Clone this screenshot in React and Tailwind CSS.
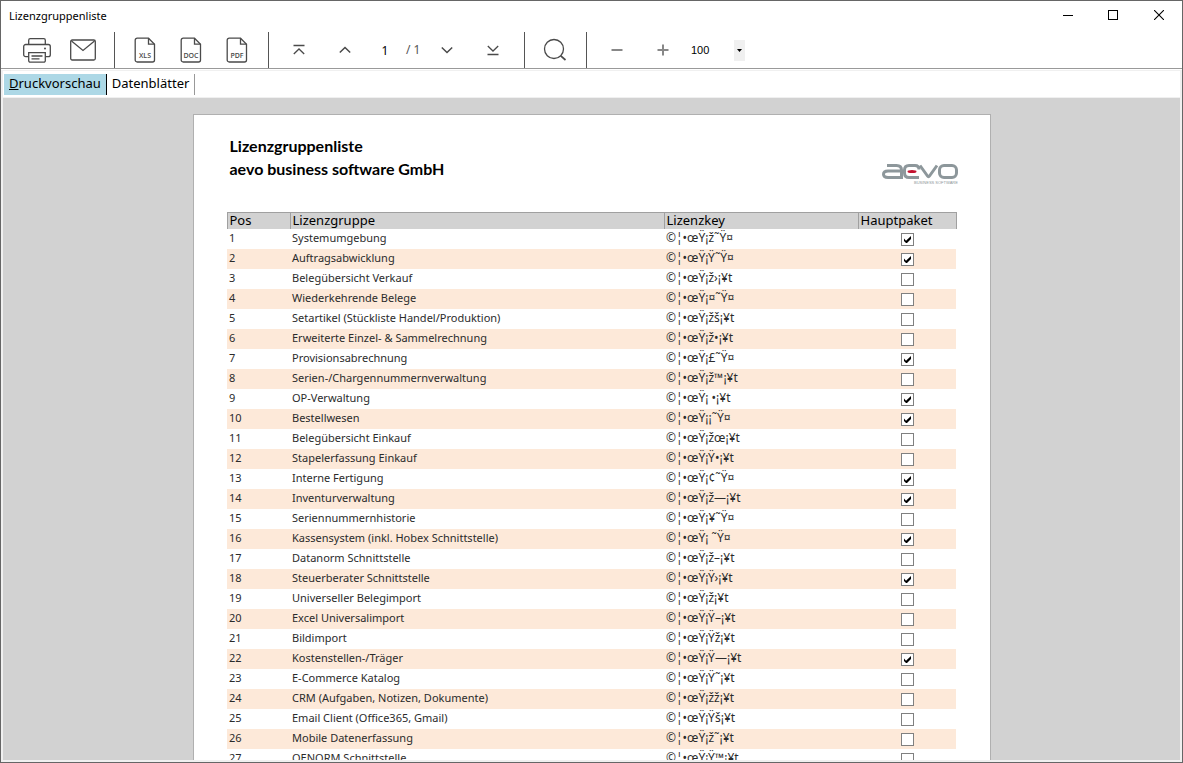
import React, { useState } from 'react';

const licenses = [
  { name: 'Systemumgebung', key: '©¦•œŸ¡ž˜Ÿ¤', main: true },
  { name: 'Auftragsabwicklung', key: '©¦•œŸ¡Ÿ˜Ÿ¤', main: true },
  { name: 'Belegübersicht Verkauf', key: '©¦•œŸ¡ž›¡¥t', main: false },
  { name: 'Wiederkehrende Belege', key: '©¦•œŸ¡¤˜Ÿ¤', main: false },
  { name: 'Setartikel (Stückliste Handel/Produktion)', key: '©¦•œŸ¡žš¡¥t', main: false },
  { name: 'Erweiterte Einzel- & Sammelrechnung', key: '©¦•œŸ¡ž•¡¥t', main: false },
  { name: 'Provisionsabrechnung', key: '©¦•œŸ¡£˜Ÿ¤', main: true },
  { name: 'Serien-/Chargennummernverwaltung', key: '©¦•œŸ¡ž™¡¥t', main: false },
  { name: 'OP-Verwaltung', key: '©¦•œŸ¡ •¡¥t', main: true },
  { name: 'Bestellwesen', key: '©¦•œŸ¡¡˜Ÿ¤', main: true },
  { name: 'Belegübersicht Einkauf', key: '©¦•œŸ¡žœ¡¥t', main: false },
  { name: 'Stapelerfassung Einkauf', key: '©¦•œŸ¡Ÿ•¡¥t', main: false },
  { name: 'Interne Fertigung', key: '©¦•œŸ¡¢˜Ÿ¤', main: true },
  { name: 'Inventurverwaltung', key: '©¦•œŸ¡ž—¡¥t', main: true },
  { name: 'Seriennummernhistorie', key: '©¦•œŸ¡¥˜Ÿ¤', main: false },
  { name: 'Kassensystem (inkl. Hobex Schnittstelle)', key: '©¦•œŸ¡ ˜Ÿ¤', main: true },
  { name: 'Datanorm Schnittstelle', key: '©¦•œŸ¡ž–¡¥t', main: false },
  { name: 'Steuerberater Schnittstelle', key: '©¦•œŸ¡Ÿ›¡¥t', main: true },
  { name: 'Universeller Belegimport', key: '©¦•œŸ¡ž¡¥t', main: false },
  { name: 'Excel Universalimport', key: '©¦•œŸ¡Ÿ–¡¥t', main: false },
  { name: 'Bildimport', key: '©¦•œŸ¡Ÿž¡¥t', main: false },
  { name: 'Kostenstellen-/Träger', key: '©¦•œŸ¡Ÿ—¡¥t', main: true },
  { name: 'E-Commerce Katalog', key: '©¦•œŸ¡Ÿ˜¡¥t', main: false },
  { name: 'CRM (Aufgaben, Notizen, Dokumente)', key: '©¦•œŸ¡žž¡¥t', main: false },
  { name: 'Email Client (Office365, Gmail)', key: '©¦•œŸ¡Ÿš¡¥t', main: false },
  { name: 'Mobile Datenerfassung', key: '©¦•œŸ¡ž˜¡¥t', main: false },
  { name: 'OENORM Schnittstelle', key: '©¦•œŸ¡Ÿ™¡¥t', main: false }
];

const ToolButton = ({ label, onClick, children }) => (
  <button
    type="button"
    aria-label={label}
    onClick={onClick}
    className="flex h-9 w-[46px] items-center justify-center text-[#4a4a4a] hover:bg-gray-100"
  >
    {children}
  </button>
);

const Separator = () => <div className="mr-[7px] ml-2 h-9 w-px bg-[#555]" />;

const FileIcon = ({ type }) => (
  <svg width="22" height="26" viewBox="0 0 22 26" fill="none" stroke="currentColor" strokeWidth="1.3">
    <path d="M3.2 1.2h11.3l6 6V23a2 2 0 0 1-2 2H3.2a2 2 0 0 1-2-2V3.2a2 2 0 0 1 2-2z" />
    <path d="M14.5 1.2v6h6" />
    <text
      x="11"
      y="20.5"
      textAnchor="middle"
      fill="currentColor"
      stroke="none"
      className="font-['Open_Sans'] text-[7px] font-semibold"
    >
      {type}
    </text>
  </svg>
);

const PrintIcon = () => (
  <svg width="28" height="25" viewBox="0 0 28 25" fill="none" stroke="currentColor" strokeWidth="1.3">
    <path d="M5.7 6.5V2.2a1.5 1.5 0 0 1 1.5-1.5h13.6a1.5 1.5 0 0 1 1.5 1.5v4.3" />
    <path d="M5.7 18.7H2.7a2 2 0 0 1-2-2V8.5a2 2 0 0 1 2-2h22.6a2 2 0 0 1 2 2v8.2a2 2 0 0 1-2 2h-3" />
    <path d="M5.7 14.7h16.6v8a1.5 1.5 0 0 1-1.5 1.5H7.2a1.5 1.5 0 0 1-1.5-1.5z" />
    <path d="M8.5 18h11M8.5 20.8h8" />
    <circle cx="22" cy="10.5" r="1" fill="currentColor" stroke="none" />
  </svg>
);

const MailIcon = () => (
  <svg width="26" height="22" viewBox="0 0 26 22" fill="none" stroke="currentColor" strokeWidth="1.3">
    <rect x="0.7" y="1" width="24.6" height="20" rx="1.5" />
    <path d="M1.5 2L13 11.5 24.5 2" />
  </svg>
);

const Logo = () => (
  <svg width="76" height="24" viewBox="0 0 76 24" fill="none" stroke="#8d979b" strokeWidth="3" aria-label="aevo">
    <path d="M5 2.5h9.500q5 0 5 4.500v7.500H6q-4.500 0-4.500-3.200t4.500-3.200h13" />
    <path d="M37 14.500H27q-4.500 0-4.500-4.500V7q0-4.500 4.500-4.500h6q4 0 4 4" />
    <path d="M38 2.500l7.500 10.500q1 1.500 2 0L55 2.500" />
    <rect x="57.500" y="2.500" width="17" height="12" rx="4.500" />
    <ellipse cx="30" cy="8.500" rx="4.500" ry="1.500" fill="#c4122f" stroke="none" />
    <text
      x="32"
      y="21"
      fill="#8d979b"
      stroke="none"
      className="font-['Liberation_Sans'] text-[4px]"
    >
      BUSINESS SOFTWARE
    </text>
  </svg>
);

const Checkbox = ({ label, defaultChecked }) => (
  <span className="relative block size-[13px]">
    <input
      type="checkbox"
      aria-label={label}
      defaultChecked={defaultChecked}
      className="peer block size-[13px] appearance-none border border-[#808080] bg-white"
    />
    <svg
      viewBox="0 0 13 13"
      className="pointer-events-none absolute inset-0 hidden size-[13px] peer-checked:block"
    >
      <path d="M3 5.500l2 2.200L10 3v3L6 10H5L3 8z" fill="#000" />
    </svg>
  </span>
);

const App = () => {
  const [page, setPage] = useState('1');
  const [zoom, setZoom] = useState('100');
  const [tab, setTab] = useState('preview');

  return (
    <div className="flex h-screen flex-col overflow-hidden border border-[#666] bg-white font-['Noto_Sans',sans-serif] text-black">
      <header className="flex h-[31px] shrink-0 items-start justify-between pl-2">
        <h1 className="pt-[7px] text-[11px] leading-4">Lizenzgruppenliste</h1>
        <div className="flex">
          <button type="button" aria-label="Minimieren" className="flex h-7 w-[45px] items-center justify-center">
            <svg width="10" height="10" viewBox="0 0 10 10" stroke="#000">
              <path d="M0 5.5h10" />
            </svg>
          </button>
          <button type="button" aria-label="Maximieren" className="flex h-7 w-[46px] items-center justify-center">
            <svg width="10" height="10" viewBox="0 0 10 10" fill="none" stroke="#000">
              <rect x="0.5" y="0.5" width="9" height="9" />
            </svg>
          </button>
          <button type="button" aria-label="Schließen" className="flex h-7 w-[46px] items-center justify-center">
            <svg width="10" height="10" viewBox="0 0 10 10" stroke="#000" strokeWidth="1.1">
              <path d="M0 0l10 10M10 0L0 10" />
            </svg>
          </button>
        </div>
      </header>

      <div className="flex h-[37px] shrink-0 items-end border-b border-[#999] pl-[13px]">
        <ToolButton label="Drucken"><PrintIcon /></ToolButton>
        <ToolButton label="E-Mail"><MailIcon /></ToolButton>
        <Separator />
        <ToolButton label="Export XLS"><FileIcon type="XLS" /></ToolButton>
        <ToolButton label="Export DOC"><FileIcon type="DOC" /></ToolButton>
        <ToolButton label="Export PDF"><FileIcon type="PDF" /></ToolButton>
        <Separator />
        <ToolButton label="Erste Seite">
          <svg width="12" height="12" viewBox="0 0 12 12" fill="none" stroke="currentColor" strokeWidth="1.3">
            <path d="M0.5 1.5h11M0.8 10L6 5l5.2 5" />
          </svg>
        </ToolButton>
        <ToolButton label="Vorherige Seite">
          <svg width="12" height="12" viewBox="0 0 12 12" fill="none" stroke="currentColor" strokeWidth="1.5">
            <path d="M0.8 8.5L6 3.5l5.2 5" />
          </svg>
        </ToolButton>
        <input
          type="text"
          aria-label="Seite"
          value={page}
          onChange={(e) => setPage(e.target.value)}
          className="h-9 w-[34px] text-center text-[12px]"
        />
        <span className="w-[22px] pl-1 text-[12px] leading-9 text-[#555]">/ 1</span>
        <ToolButton label="Nächste Seite">
          <svg width="12" height="12" viewBox="0 0 12 12" fill="none" stroke="currentColor" strokeWidth="1.5">
            <path d="M0.8 3.5L6 8.5l5.2-5" />
          </svg>
        </ToolButton>
        <ToolButton label="Letzte Seite">
          <svg width="12" height="12" viewBox="0 0 12 12" fill="none" stroke="currentColor" strokeWidth="1.3">
            <path d="M0.5 10.5h11M0.8 2L6 7l5.2-5" />
          </svg>
        </ToolButton>
        <Separator />
        <ToolButton label="Suchen">
          <svg width="24" height="24" viewBox="0 0 24 24" fill="none" stroke="currentColor" strokeWidth="1.3">
            <circle cx="11" cy="11" r="9.5" />
            <path d="M17.8 17.8l4.7 4.2" strokeWidth="1.7" />
          </svg>
        </ToolButton>
        <Separator />
        <ToolButton label="Verkleinern">
          <svg width="12" height="12" viewBox="0 0 12 12" stroke="#888" strokeWidth="2">
            <path d="M0.5 6h11" />
          </svg>
        </ToolButton>
        <ToolButton label="Vergrößern">
          <svg width="12" height="12" viewBox="0 0 12 12" stroke="#888" strokeWidth="2">
            <path d="M0.5 6h11M6 0.5v11" />
          </svg>
        </ToolButton>
        <div className="relative h-9">
          <select
            aria-label="Zoom"
            value={zoom}
            onChange={(e) => setZoom(e.target.value)}
            className="h-9 w-[59px] appearance-none pl-[5px] font-['Liberation_Sans',sans-serif] text-[11px]"
          >
            <option>50</option>
            <option>100</option>
            <option>200</option>
          </select>
          <span className="pointer-events-none absolute top-2 right-0 flex h-[21px] w-[11px] items-center justify-center bg-[#f0f0f0]">
            <svg width="5" height="3" viewBox="0 0 5 3">
              <path d="M0 0h5L2.5 3z" />
            </svg>
          </span>
        </div>
      </div>

      <main className="mt-px flex min-h-0 flex-1 flex-col border-2 border-t border-[#f0f0f0]">
        <div role="tablist" className="flex h-[27px] shrink-0 items-center border-b border-[#f0f0f0] pl-px text-[13px] leading-[18px]">
          <button
            type="button"
            role="tab"
            aria-selected={tab === 'preview'}
            onClick={() => setTab('preview')}
            className="h-[21px] border-r border-black bg-[#add8e6] px-[5px] pb-[3px]"
          >
            <span className="underline">D</span>ruckvorschau
          </button>
          <button
            type="button"
            role="tab"
            aria-selected={tab === 'sheets'}
            onClick={() => setTab('sheets')}
            className="h-[21px] border-r border-[#999] px-[5px] pb-[3px]"
          >
            Datenblätter
          </button>
        </div>

        <div className="min-h-0 flex-1 overflow-hidden bg-[#d2d2d2] pt-4">
          <article className="mx-auto w-full max-w-[798px] border border-[#b0b0b0] bg-white px-[33px] pb-10">
            <div className="flex h-[97px] items-start justify-between pl-[3px]">
              <h2 className="pt-[19px] font-['Lato',sans-serif] text-[16px] leading-[23px] font-bold">
                Lizenzgruppenliste
                <br />
                aevo business software GmbH
              </h2>
              <div className="-mr-px pt-12">
                <Logo />
              </div>
            </div>
            <table className="w-full table-fixed border-collapse text-left text-[11px] leading-[17px] text-[#2b2b2b]">
              <colgroup>
                <col className="w-[63px]" />
                <col />
                <col className="w-[194px]" />
                <col className="w-[98px]" />
              </colgroup>
              <thead>
                <tr className="h-4 bg-[#d2d2d2] align-top text-[13px] leading-[14px] text-black">
                  {['Pos', 'Lizenzgruppe', 'Lizenzkey', 'Hauptpaket'].map((title) => (
                    <th key={title} className="border-x border-t border-[#a0a0a0] p-0 pb-0.5 pl-0.5 font-normal">
                      {title}
                    </th>
                  ))}
                </tr>
              </thead>
              <tbody>
                {licenses.map((item, i) => (
                  <tr key={item.name} className="h-5 align-top even:bg-[#fde9d9]">
                    <td className="p-0 pl-0.5">{i + 1}</td>
                    <td className="p-0 pl-0.5">{item.name}</td>
                    <td className="p-0 pl-0.5 text-[12px]">{item.key}</td>
                    <td className="p-0 pt-1">
                      <div className="flex justify-center">
                        <Checkbox label={item.name} defaultChecked={item.main} />
                      </div>
                    </td>
                  </tr>
                ))}
              </tbody>
            </table>
          </article>
        </div>
      </main>
    </div>
  );
};

export default App;
